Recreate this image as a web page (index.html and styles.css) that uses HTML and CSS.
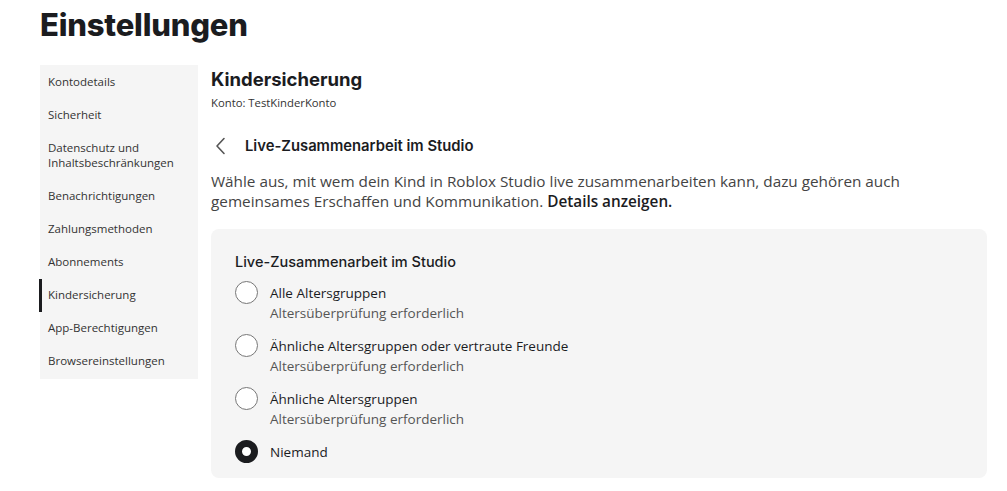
FILE: index.html
```html
<!DOCTYPE html>
<html lang="de">

<head>
    <meta charset="UTF-8">
    <meta name="viewport" content="width=device-width, initial-scale=1.0">
    <title>Einstellungen</title>
    <link rel="stylesheet" href="styles.css">
</head>

<body>
    <div class="page">
        <h1>Einstellungen</h1>
        <div class="layout">
            <ul class="sidebar">
                <li>Kontodetails</li>
                <li>Sicherheit</li>
                <li>Datenschutz und Inhaltsbeschränkungen</li>
                <li>Benachrichtigungen</li>
                <li>Zahlungsmethoden</li>
                <li>Abonnements</li>
                <li class="active">Kindersicherung</li>
                <li>App-Berechtigungen</li>
                <li>Browsereinstellungen</li>
            </ul>

            <div class="main">
                <h2>Kindersicherung</h2>
                <p class="account">Konto: TestKinderKonto</p>

                <div class="back-row">
                    <svg class="back" width="12" height="18" viewBox="0 0 12 18">
                        <path d="M10 1.5 L3 9 L10 16.5" fill="none" stroke="#555" stroke-width="1.6" stroke-linecap="round" stroke-linejoin="round"/>
                    </svg>
                    <span>Live-Zusammenarbeit im Studio</span>
                </div>

                <p class="desc">Wähle aus, mit wem dein Kind in Roblox Studio live zusammenarbeiten kann, dazu gehören auch gemeinsames Erschaffen und Kommunikation. <strong>Details anzeigen.</strong></p>

                <div class="card">
                    <h3>Live-Zusammenarbeit im Studio</h3>
                    <div class="option">
                        <span class="radio"></span>
                        <div class="option-text">
                            <div class="label">Alle Altersgruppen</div>
                            <div class="sub">Altersüberprüfung erforderlich</div>
                        </div>
                    </div>
                    <div class="option">
                        <span class="radio"></span>
                        <div class="option-text">
                            <div class="label">Ähnliche Altersgruppen oder vertraute Freunde</div>
                            <div class="sub">Altersüberprüfung erforderlich</div>
                        </div>
                    </div>
                    <div class="option">
                        <span class="radio"></span>
                        <div class="option-text">
                            <div class="label">Ähnliche Altersgruppen</div>
                            <div class="sub">Altersüberprüfung erforderlich</div>
                        </div>
                    </div>
                    <div class="option">
                        <span class="radio checked"></span>
                        <div class="option-text">
                            <div class="label">Niemand</div>
                        </div>
                    </div>
                </div>
            </div>
        </div>
    </div>
</body>

</html>
```

FILE: styles.css
```css
body {
    font-family: "Open Sans", "Noto Sans", sans-serif;
    margin: 0;
    padding: 0;
    background-color: #fff;
    color: #1b1c1f;
}

.page {
    padding: 5px 20px 0 40px;
}

h1 {
    font-family: Inter, sans-serif;
    font-size: 31px;
    font-weight: 800;
    letter-spacing: -0.2px;
    margin: 0 0 20px;
    line-height: 40px;
}

.layout {
    display: flex;
    gap: 13px;
}

.sidebar {
    list-style: none;
    margin: 0;
    padding: 1px 0;
    width: 158px;
    flex-shrink: 0;
    background: #f5f5f5;
    align-self: flex-start;
}

.sidebar li {
    font-size: 11.5px;
    line-height: 15px;
    color: #333;
    padding: 8px 8px 10px;
}

.sidebar li.active {
    box-shadow: inset 3px 0 0 #1b1c1f;
    margin-left: -1px;
    padding-left: 9px;
}

.main {
    flex: 1;
}

h2 {
    font-family: Inter, sans-serif;
    font-size: 18.5px;
    font-weight: 700;
    margin: 2px 0 0;
    line-height: 24px;
}

.account {
    font-size: 11.3px;
    color: #333;
    margin: 5px 0 0;
    line-height: 14px;
}

.back-row {
    display: flex;
    align-items: center;
    margin-top: 24px;
    height: 24px;
}

.back {
    margin-left: 3px;
    margin-right: 19px;
}

.back-row span {
    font-family: Inter, sans-serif;
    font-size: 14.8px;
    font-weight: 600;
}

.desc {
    font-size: 15.3px;
    line-height: 20px;
    color: #444;
    margin: 13px 0 18px;
}

.desc strong {
    font-weight: 600;
    color: #1b1c1f;
}

.card {
    background: #f5f5f5;
    border-radius: 8px;
    padding: 22px 24px 15px;
}

h3 {
    font-family: Inter, sans-serif;
    font-size: 14.5px;
    font-weight: 500;
    margin: 0 0 8px;
    line-height: 22px;
}

.option {
    display: flex;
    gap: 12px;
    min-height: 53px;
}

.radio {
    width: 21px;
    height: 21px;
    border: 1.5px solid #777;
    border-radius: 50%;
    flex-shrink: 0;
    background: #fff;
    margin-top: 0;
}

.radio.checked {
    border: 7.5px solid #1b1c1f;
    width: 9px;
    height: 9px;
}

.option-text {
    line-height: 20px;
    padding-top: 2px;
}

.label {
    font-size: 13.5px;
    color: #1b1c1f;
}

.sub {
    font-size: 13.5px;
    color: #555;
}

.option:last-child {
    min-height: 0;
}
```
